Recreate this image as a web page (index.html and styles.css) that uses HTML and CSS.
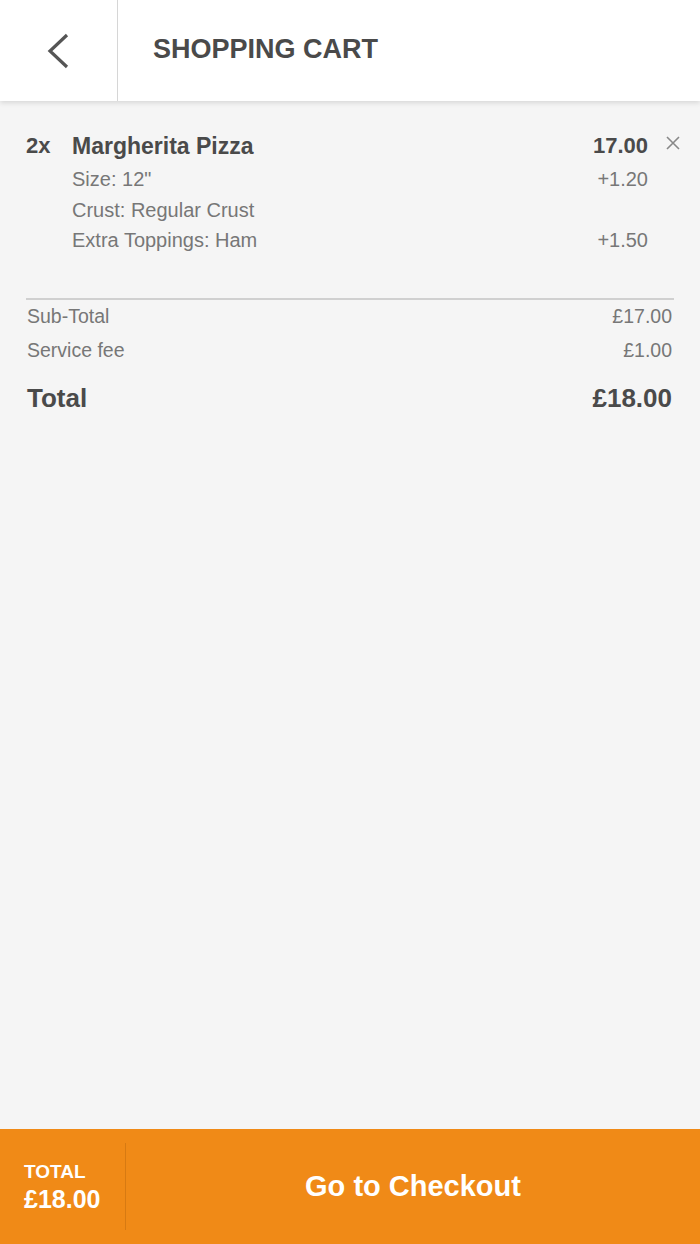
FILE: index.html
```html
<!DOCTYPE html>
<html lang="en">
<head>
  <meta charset="UTF-8" />
  <meta name="viewport" content="width=device-width, initial-scale=1.0"/>
  <title>Shopping Cart</title>
  <link rel="stylesheet" href="styles.css">
</head>
<body>
  <header class="topbar">
    <a class="back" href="#" aria-label="Back">
      <svg width="24" height="36" viewBox="0 0 24 36">
        <polyline points="21,2 4,18 21,34" fill="none" stroke="#555" stroke-width="3.2"/>
      </svg>
    </a>
    <h1 class="title">SHOPPING CART</h1>
  </header>

  <main class="cart">
    <div class="item">
      <div class="item-row">
        <span class="qty">2x</span>
        <span class="name">Margherita Pizza</span>
        <span class="price">17.00</span>
        <button class="remove" aria-label="Remove">
          <svg width="14" height="14" viewBox="0 0 14 14">
            <path d="M1 1 L13 13 M13 1 L1 13" stroke="#888" stroke-width="1.6"/>
          </svg>
        </button>
      </div>
      <div class="option">
        <span class="opt-label">Size: 12"</span>
        <span class="opt-price">+1.20</span>
      </div>
      <div class="option">
        <span class="opt-label">Crust: Regular Crust</span>
        <span class="opt-price"></span>
      </div>
      <div class="option">
        <span class="opt-label">Extra Toppings: Ham</span>
        <span class="opt-price">+1.50</span>
      </div>
    </div>

    <div class="summary">
      <div class="sum-row">
        <span>Sub-Total</span>
        <span>£17.00</span>
      </div>
      <div class="sum-row">
        <span>Service fee</span>
        <span>£1.00</span>
      </div>
      <div class="sum-row total">
        <span>Total</span>
        <span>£18.00</span>
      </div>
    </div>
  </main>

  <footer class="checkout-bar">
    <div class="bar-total">
      <span class="bar-label">TOTAL</span>
      <span class="bar-amount">£18.00</span>
    </div>
    <a class="checkout" href="#">Go to Checkout</a>
  </footer>
</body>
</html>
```

FILE: styles.css
```css
body {
  margin: 0;
  padding: 0;
  background: #f5f5f5;
  font-family: 'Liberation Sans', Arial, sans-serif;
  color: #4a4a4a;
  height: 100vh;
  display: flex;
  flex-direction: column;
  overflow: hidden;
}
.topbar {
  height: 101px;
  flex-shrink: 0;
  background: #ffffff;
  display: flex;
  align-items: center;
  box-shadow: 0 2px 5px rgba(0,0,0,0.12);
  position: relative;
  z-index: 1;
}
.back {
  width: 118px;
  height: 100%;
  border-right: 1px solid #d6d6d6;
  display: flex;
  align-items: center;
  padding-left: 46px;
  box-sizing: border-box;
}
.title {
  margin: 0 0 2px 35px;
  font-size: 27px;
  font-weight: bold;
  color: #4a4a4a;
}
.cart {
  flex: 1;
}
.item {
  padding: 30px 20px 42px 26px;
}
.item-row {
  display: flex;
  align-items: center;
  line-height: 30px;
  font-weight: bold;
  font-size: 23px;
}
.qty {
  width: 46px;
  font-size: 22px;
}
.name {
  flex: 1;
}
.price {
  font-size: 22px;
}
.remove {
  width: 32px;
  height: 30px;
  padding: 0;
  border: none;
  background: none;
  display: flex;
  justify-content: flex-end;
  align-items: flex-start;
  padding-top: 5px;
  box-sizing: border-box;
}
.option {
  display: flex;
  justify-content: space-between;
  padding: 0 32px 0 46px;
  font-size: 20px;
  line-height: 30.5px;
  color: #777;
}
.item-row + .option {
  margin-top: 3px;
}
.summary {
  margin: 0 26px;
  border-top: 2px solid #d0d0d0;
  padding: 0 2px 0 1px;
}
.sum-row {
  display: flex;
  justify-content: space-between;
  font-size: 19.5px;
  line-height: 34px;
  color: #777;
}
.sum-row:first-child {
  margin-top: -1px;
}
.sum-row.total {
  margin-top: 16px;
  font-size: 26px;
  line-height: 30px;
  font-weight: bold;
  color: #4a4a4a;
}
.checkout-bar {
  height: 115px;
  flex-shrink: 0;
  background: #f08a17;
  display: flex;
  color: #ffffff;
}
.bar-total {
  width: 126px;
  margin: 14px 0;
  padding-left: 24px;
  box-sizing: border-box;
  border-right: 1px solid #d77a12;
  display: flex;
  flex-direction: column;
  justify-content: center;
  font-weight: bold;
}
.bar-label {
  font-size: 19px;
  line-height: 24px;
}
.bar-amount {
  font-size: 25px;
  line-height: 30px;
}
.checkout {
  flex: 1;
  display: flex;
  align-items: center;
  justify-content: center;
  color: #ffffff;
  text-decoration: none;
  font-weight: bold;
  font-size: 29px;
}
```
